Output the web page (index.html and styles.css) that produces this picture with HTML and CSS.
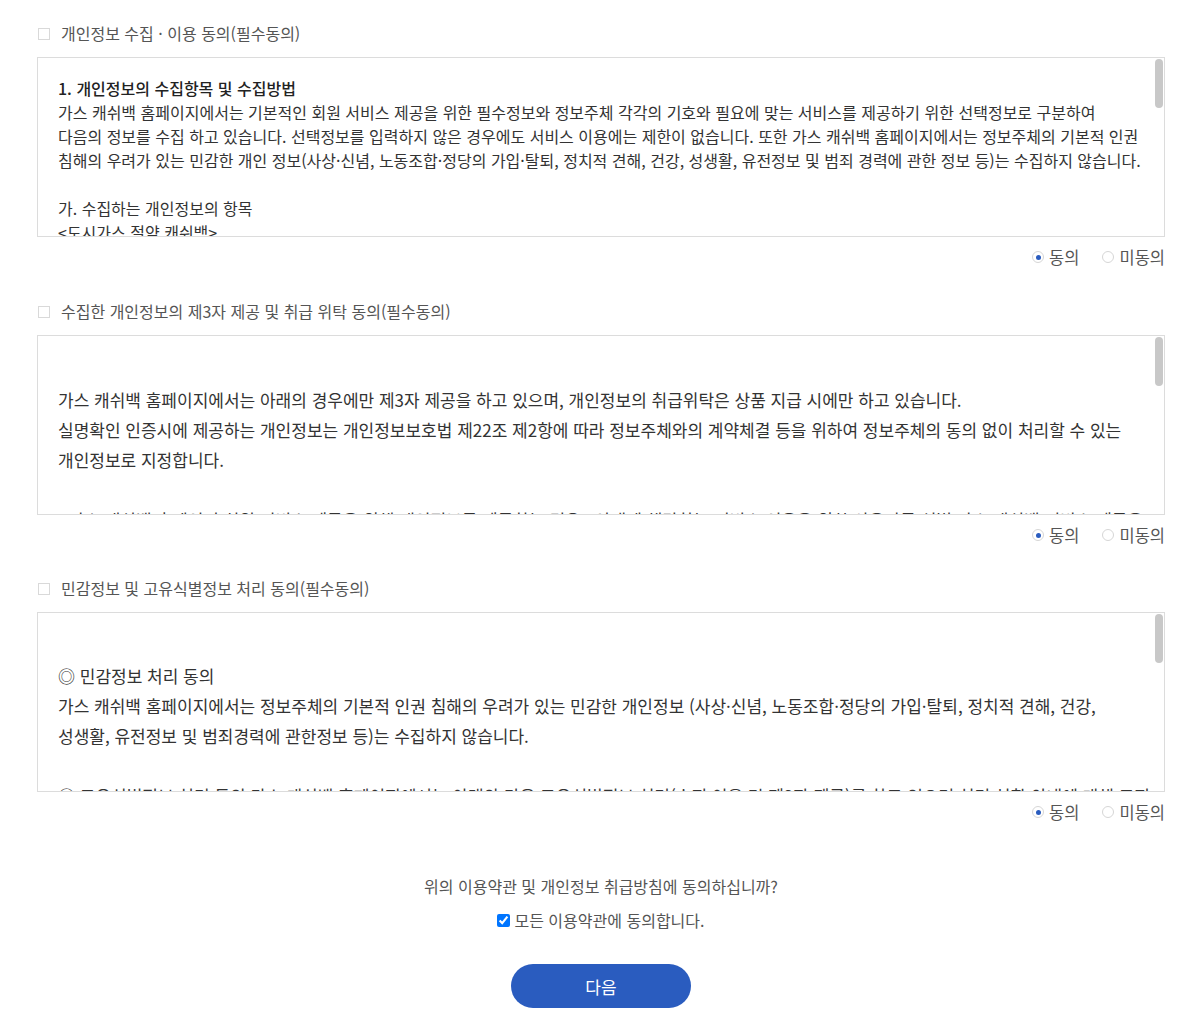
FILE: index.html
```html
<!DOCTYPE html>
<html lang="ko">
<head>
<meta charset="utf-8">
<title>약관 동의</title>
<link rel="stylesheet" href="styles.css">
</head>
<body>
<div class="page">
  <section class="term first">
    <div class="term-head"><span class="chk"></span><span class="term-title">개인정보 수집 · 이용 동의(필수동의)</span></div>
    <div class="box-wrap">
      <div class="term-box dense">
        <p class="strong">1. 개인정보의 수집항목 및 수집방법</p>
        <p>가스 캐쉬백 홈페이지에서는 기본적인 회원 서비스 제공을 위한 필수정보와 정보주체 각각의 기호와 필요에 맞는 서비스를 제공하기 위한 선택정보로 구분하여<br>다음의 정보를 수집 하고 있습니다. 선택정보를 입력하지 않은 경우에도 서비스 이용에는 제한이 없습니다. 또한 가스 캐쉬백 홈페이지에서는 정보주체의 기본적 인권<br>침해의 우려가 있는 민감한 개인 정보(사상·신념, 노동조합·정당의 가입·탈퇴, 정치적 견해, 건강, 성생활, 유전정보 및 범죄 경력에 관한 정보 등)는 수집하지 않습니다.</p>
        <p class="blank">&nbsp;</p>
        <p>가. 수집하는 개인정보의 항목</p>
        <p>&lt;도시가스 절약 캐쉬백&gt;</p>
        <p>- 필수항목 : 성명, 생년월일, 휴대전화번호, 주소, 도시가스 고객번호</p>
        <p>- 선택항목 : 이메일</p>
      </div>
      <span class="thumb"></span>
    </div>
    <div class="choice">
      <label class="opt"><span class="radio on"></span>동의</label>
      <label class="opt"><span class="radio"></span>미동의</label>
    </div>
  </section>

  <section class="term">
    <div class="term-head"><span class="chk"></span><span class="term-title">수집한 개인정보의 제3자 제공 및 취급 위탁 동의(필수동의)</span></div>
    <div class="box-wrap">
      <div class="term-box low">
        <p class="blank">&nbsp;</p>
        <p>가스 캐쉬백 홈페이지에서는 아래의 경우에만 제3자 제공을 하고 있으며, 개인정보의 취급위탁은 상품 지급 시에만 하고 있습니다.<br>실명확인 인증시에 제공하는 개인정보는 개인정보보호법 제22조 제2항에 따라 정보주체와의 계약체결 등을 위하여 정보주체의 동의 없이 처리할 수 있는<br>개인정보로 지정합니다.</p>
        <p class="blank">&nbsp;</p>
        <p>- 가스 캐쉬백 홈페이지 회원 서비스 제공을 위해 개인정보를 제공하는 경우 : 아래에 해당하는 서비스 이용을 위한 사용자를 식별 가스 캐쉬백 서비스 제공을</p>
        <p>위하여 필요한 최소한의 개인정보를 제공합니다.</p>
      </div>
      <span class="thumb"></span>
    </div>
    <div class="choice">
      <label class="opt"><span class="radio on"></span>동의</label>
      <label class="opt"><span class="radio"></span>미동의</label>
    </div>
  </section>

  <section class="term">
    <div class="term-head"><span class="chk"></span><span class="term-title">민감정보 및 고유식별정보 처리 동의(필수동의)</span></div>
    <div class="box-wrap">
      <div class="term-box">
        <p class="blank">&nbsp;</p>
        <p>◎ 민감정보 처리 동의</p>
        <p>가스 캐쉬백 홈페이지에서는 정보주체의 기본적 인권 침해의 우려가 있는 민감한 개인정보 (사상·신념, 노동조합·정당의 가입·탈퇴, 정치적 견해, 건강,<br>성생활, 유전정보 및 범죄경력에 관한정보 등)는 수집하지 않습니다.</p>
        <p class="blank">&nbsp;</p>
        <p>◎ 고유식별정보 처리 동의 가스 캐쉬백 홈페이지에서는 아래와 같은 고유식별정보 처리(수집·이용 및 제3자 제공)를 하고 있으며 처리 현황 안내에 대해 고지</p>
        <p>합니다.</p>
      </div>
      <span class="thumb"></span>
    </div>
    <div class="choice">
      <label class="opt"><span class="radio on"></span>동의</label>
      <label class="opt"><span class="radio"></span>미동의</label>
    </div>
  </section>

  <div class="confirm">
    <p class="question">위의 이용약관 및 개인정보 취급방침에 동의하십니까?</p>
    <label class="all"><input type="checkbox" checked>모든 이용약관에 동의합니다.</label>
    <button class="next" type="button">다음</button>
  </div>
</div>
</body>
</html>
```

FILE: styles.css
```css
html, body {
  margin: 0;
  padding: 0;
  background: #fff;
}
body {
  font-family: "Noto Sans CJK KR", "Noto Sans", sans-serif;
  font-size: 16px;
  color: #333;
}
.page {
  width: 1128px;
  padding: 21px 0 0 37px;
}
.term {
  margin-bottom: 29px;
}
.term.first {
  margin-bottom: 30px;
}
.term-head {
  display: flex;
  align-items: center;
  height: 24px;
  margin-bottom: 12px;
}
.chk {
  width: 10px;
  height: 10px;
  border: 1px solid #d9d9d9;
  margin: 1px 11px 0 1px;
  box-sizing: content-box;
}
.term-title {
  color: #555;
  font-size: 16px;
}
.box-wrap {
  position: relative;
}
.term-box {
  height: 180px;
  box-sizing: border-box;
  border: 1px solid #dcdcdc;
  overflow: hidden;
  padding: 18px 20px 0 20px;
  font-size: 17px;
  line-height: 30px;
  color: #333;
}
.term-box.low {
  padding-top: 19px;
}
.term-box.dense {
  font-size: 16px;
  line-height: 24px;
  padding-top: 18px;
}
.term-box p {
  margin: 0;
  white-space: nowrap;
}
.term-box .strong {
  font-weight: 500;
  color: #222;
}
.thumb {
  position: absolute;
  top: 2px;
  right: 2px;
  width: 8px;
  height: 49px;
  border-radius: 4px;
  background: #c8c8c8;
}
.choice {
  display: flex;
  justify-content: flex-end;
  gap: 23px;
  margin-top: 8px;
  height: 24px;
  align-items: center;
}
.opt {
  display: flex;
  align-items: center;
  color: #555;
  font-size: 16.5px;
}
.radio {
  width: 10px;
  height: 10px;
  border: 1px solid #d6d6d6;
  border-radius: 50%;
  margin-right: 5px;
  display: flex;
  align-items: center;
  justify-content: center;
}
.radio.on::after {
  content: "";
  width: 5px;
  height: 5px;
  border-radius: 50%;
  background: #2a5cbf;
}
.confirm {
  display: flex;
  flex-direction: column;
  align-items: center;
  padding-top: 21px;
}
.question {
  margin: 0;
  height: 24px;
  line-height: 24px;
  color: #555;
}
.all {
  display: flex;
  align-items: center;
  margin-top: 10px;
  height: 24px;
  color: #555;
}
.all input {
  margin: 0 4px 0 0;
  width: 13px;
  height: 13px;
}
.next {
  margin-top: 32px;
  width: 180px;
  height: 44px;
  border: none;
  border-radius: 22px;
  background: #2a5cbf;
  color: #fff;
  font-family: "Noto Sans CJK KR", "Noto Sans", sans-serif;
  font-size: 17px;
}
```
